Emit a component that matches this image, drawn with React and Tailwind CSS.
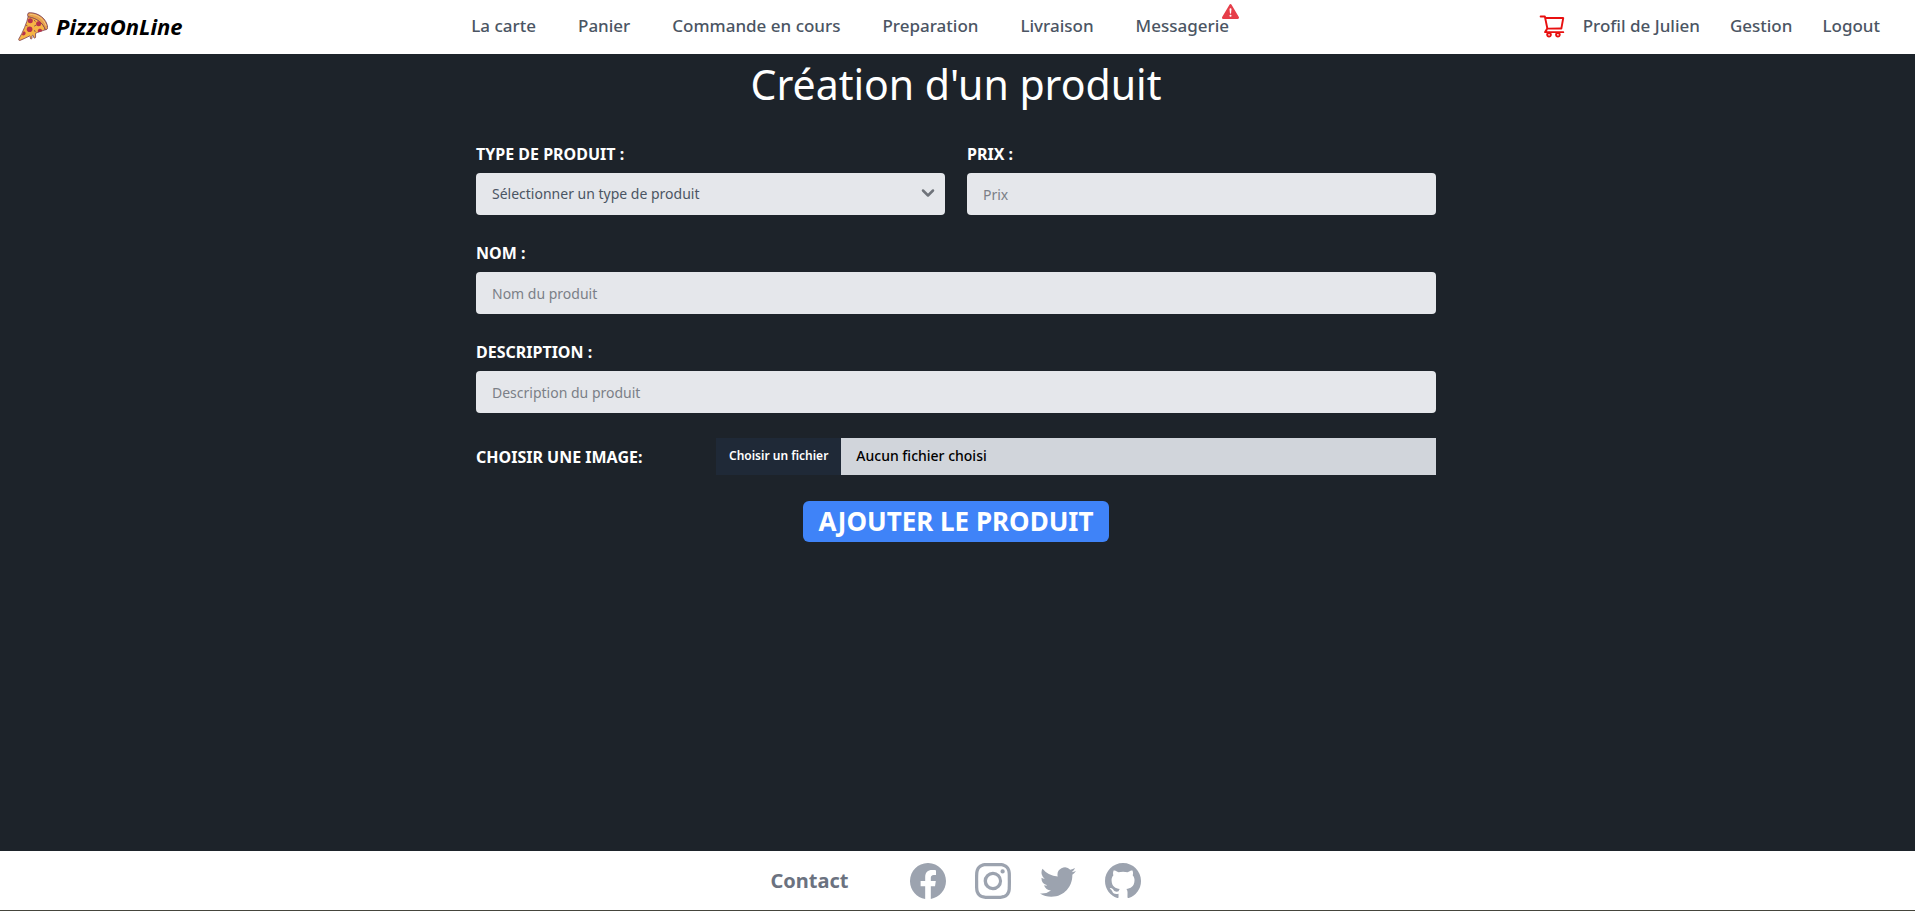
import { BsExclamationTriangleFill, BsFacebook, BsInstagram, BsTwitter, BsGithub } from "react-icons/bs";
import { AiOutlineShoppingCart } from "react-icons/ai";
import { ChevronDown } from "lucide-react";

const mainLinks = ["La carte", "Panier", "Commande en cours", "Preparation", "Livraison", "Messagerie"];
const userLinks = ["Profil de Julien", "Gestion", "Logout"];
const socials = [
  { name: "Facebook", Icon: BsFacebook },
  { name: "Instagram", Icon: BsInstagram },
  { name: "Twitter", Icon: BsTwitter },
  { name: "GitHub", Icon: BsGithub },
];

function PizzaIcon() {
  return (
    <svg viewBox="0 0 30 29" className="h-[29px] w-[30px]" aria-hidden="true">
      <path d="M10.5 3.5C8.8 11 5 20 .8 27c-.4 1 .3 1.8 1.3 1.4 3.300-1.200 6.300-3 9.400-4.400.5 0 .8.300.8.800v1.200c0 1.300 1.700 1.300 1.700 0v-2c.1-.9 1.300-.9 1.500 0l.2 1.300c.3 1.200 1.900 1 1.900-.3l-.1-3.600c2.700-1.400 6.200-2.500 9.800-3.600C25.500 10 19 5 10.500 3.500Z" fill="#f6b545" stroke="#7b3d55" strokeWidth=".8" />
      <path d="M11 .8C20.500.2 29 7.200 29.600 15.500c.1 1.400-.9 2.300-2.200 2.300C24.800 10.800 19 6.200 10.300 4.800 9.200 3.600 9.400 1 11 .8Z" fill="#e8a04c" stroke="#7b3d55" strokeWidth=".9" />
      <path d="M12 2.200c7.500.2 13.800 4.800 16 11.300" fill="none" stroke="#f7c97c" strokeWidth="1" strokeLinecap="round" />
      <circle cx="12.300" cy="8.800" r="2.500" fill="#b8324a" />
      <circle cx="20.600" cy="11.700" r="2.500" fill="#b8324a" />
      <circle cx="11.600" cy="17.300" r="2.800" fill="#b8324a" />
      <path d="M20.300 20.300c-1.500-1.900.5-4.200 2.600-3.300 1.200.6 1.500 1.600 1.200 2.200Z" fill="#b8324a" />
      <path d="M5.700 19.300c2 .2 2.700 2.800.9 3.800-1.100.6-2.300.2-2.700-.7Z" fill="#b8324a" />
      <path d="M16.300 8.200l.9 1.200M16.500 14l1.400-.8M16.600 18.500l.5 1.200M8.300 13.300l.9.500" stroke="#7b3d55" strokeWidth=".8" strokeLinecap="round" />
    </svg>
  );
}

function Header() {
  return (
    <header className="flex h-[54px] shrink-0 items-center justify-between bg-white pl-[18px] pr-[35px]">
      <a href="#accueil" className="flex items-center gap-2 pb-[2px] text-[22px] font-bold italic leading-8 text-black">
        <PizzaIcon />
        PizzaOnLine
      </a>
      <nav aria-label="Navigation principale" className="flex items-center gap-[42px] pb-[3px] pr-5 text-[17px] font-medium leading-6 text-[#4b5563]">
        {mainLinks.map((label) => (
          <a key={label} href="#" className="relative">
            {label}
            {label === "Messagerie" && (
              <BsExclamationTriangleFill className="absolute -right-[10px] -top-[11px] text-[17px] text-[#e63e49]" />
            )}
          </a>
        ))}
      </nav>
      <nav aria-label="Compte" className="flex items-center gap-[30px] pb-[3px] text-[17px] font-medium leading-6 text-[#4b5563]">
        <div className="flex items-center gap-[17px]">
          <a href="#panier" aria-label="Voir le panier" className="text-[28px] text-[#e81010]">
            <AiOutlineShoppingCart />
          </a>
          <a href="#">{userLinks[0]}</a>
        </div>
        <a href="#">{userLinks[1]}</a>
        <a href="#">{userLinks[2]}</a>
      </nav>
    </header>
  );
}

const labelClass = "block text-[16px] font-bold uppercase leading-6 text-white";
const fieldClass =
  "mt-[7px] block h-[42px] w-full appearance-none rounded-[4px] bg-[#e5e7eb] px-4 text-[14px] leading-5 text-[#4b5563] outline-none placeholder:text-[#7b7f87]";

function TextField({ id, label, placeholder }) {
  return (
    <div>
      <label htmlFor={id} className={labelClass}>{label}</label>
      <input id={id} type="text" placeholder={placeholder} className={fieldClass} />
    </div>
  );
}

function ProductForm() {
  return (
    <form className="mx-auto mt-7 flex w-full max-w-[960px] flex-col" onSubmit={(e) => e.preventDefault()}>
      <div className="flex flex-col gap-[26px]">
        <div className="grid grid-cols-2 gap-[22px]">
          <div>
            <label htmlFor="type" className={labelClass}>Type de produit :</label>
            <div className="relative">
              <select id="type" className={fieldClass} defaultValue="">
                <option value="">Sélectionner un type de produit</option>
              </select>
              <ChevronDown size={20} strokeWidth={3} className="pointer-events-none absolute right-[7px] top-[10px] text-[#6f737a]" />
            </div>
          </div>
          <TextField id="prix" label="Prix :" placeholder="Prix" />
        </div>
        <TextField id="nom" label="Nom :" placeholder="Nom du produit" />
        <TextField id="description" label="Description :" placeholder="Description du produit" />
        <div className="-mt-px grid grid-cols-4 items-center">
          <label htmlFor="image" className={labelClass}>Choisir une image:</label>
          <div className="relative col-span-3">
            <input id="image" type="file" className="sr-only" />
            <label htmlFor="image" className="flex h-[37px] cursor-pointer bg-[#d1d5db] leading-9">
              <span className="bg-[#1f2937] px-[13px] text-[12px] font-semibold text-white">Choisir un fichier</span>
              <span className="px-[15px] text-[14px] font-medium text-black">Aucun fichier choisi</span>
            </label>
          </div>
        </div>
      </div>
      <button type="submit" className="mt-[26px] h-[41px] self-center rounded-md bg-[#3f83f8] px-4 text-[26px] font-bold uppercase leading-[41px] text-white">
        Ajouter le produit
      </button>
    </form>
  );
}

function Footer() {
  return (
    <footer className="flex h-[60px] shrink-0 items-center justify-center gap-[61px] border-b border-[#45453c] bg-white pr-1">
      <p className="text-[20px] font-bold text-[#6b7280]">Contact</p>
      <div className="flex gap-[29px] text-[36px] text-[#9ca3af]">
        {socials.map(({ name, Icon }) => (
          <a key={name} href="#" aria-label={name}>
            <Icon />
          </a>
        ))}
      </div>
    </footer>
  );
}

export default function App() {
  return (
    <div className="flex min-h-screen flex-col bg-[#1d232a] font-['Noto_Sans','Open_Sans',sans-serif]">
      <Header />
      <main className="grow pr-[3px]">
        <h1 className="text-center text-[41px] leading-[60px] text-white">Création d'un produit</h1>
        <ProductForm />
      </main>
      <Footer />
    </div>
  );
}
